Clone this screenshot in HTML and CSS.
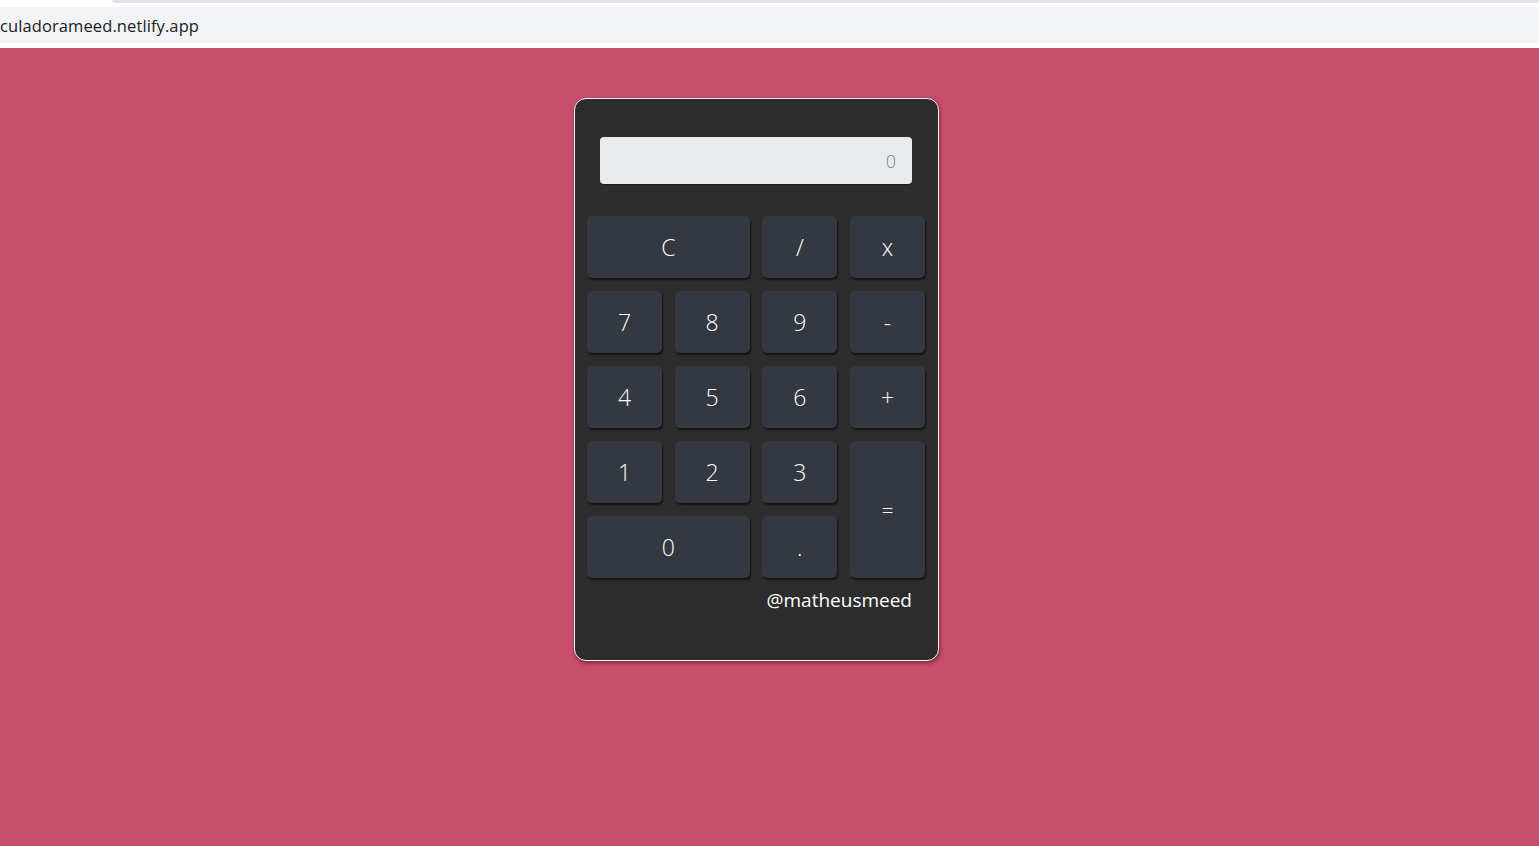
FILE: index.html
```html
<!DOCTYPE html>
<html lang="pt-BR">
<head>
<meta charset="utf-8">
<title>Calculadora</title>
<link rel="stylesheet" href="styles.css">
</head>
<body>
<div class="chrome">
  <div class="tabline"></div>
  <div class="urlbar"><span class="url">culadorameed.netlify.app</span></div>
</div>
<main class="page">
  <div class="calc">
    <div class="display">0</div>
    <div class="keys">
      <button class="key wide">C</button>
      <button class="key">/</button>
      <button class="key">x</button>
      <button class="key">7</button>
      <button class="key">8</button>
      <button class="key">9</button>
      <button class="key">-</button>
      <button class="key">4</button>
      <button class="key">5</button>
      <button class="key">6</button>
      <button class="key">+</button>
      <button class="key">1</button>
      <button class="key">2</button>
      <button class="key">3</button>
      <button class="key tall">=</button>
      <button class="key wide">0</button>
      <button class="key">.</button>
    </div>
    <div class="credit">@matheusmeed</div>
  </div>
</main>
</body>
</html>
```
FILE: styles.css
```css
* { box-sizing: border-box; }
html, body { margin: 0; padding: 0; }
body {
  width: 1539px;
  height: 846px;
  overflow: hidden;
  background: #c94e6d;
  font-family: "Open Sans", "Noto Sans", sans-serif;
}
.chrome {
  height: 48px;
  background: #ffffff;
  overflow: hidden;
}
.tabline {
  height: 3px;
  margin-left: 112px;
  background: #dfe3e7;
  border-bottom-left-radius: 3px;
}
.urlbar {
  margin-top: 4px;
  height: 36px;
  background: #f1f3f4;
  display: flex;
  align-items: center;
  padding-left: 0;
}
.url {
  font-family: "Open Sans", "Noto Sans", sans-serif;
  font-size: 16.5px;
  color: #202124;
  padding-left: 0;
  letter-spacing: 0.1px;
}
.page {
  padding: 50px 0 0 574px;
}
.calc {
  width: 365px;
  height: 563px;
  background: #2d2d2d;
  border: 1px solid #f4f4f4;
  border-radius: 12px;
  box-shadow: 1px 2px 4px rgba(60, 10, 25, 0.55);
  padding: 38px 12px 0 12px;
}
.display {
  margin: 0 14px 0 13px;
  height: 47px;
  background: #e8ebee;
  border-radius: 4px;
  box-shadow: 0 1px 1px rgba(0,0,0,0.35);
  color: #7b7b7b;
  font-size: 18px;
  font-weight: 300;
  display: flex;
  align-items: center;
  justify-content: flex-end;
  padding-right: 16px;
}
.keys {
  margin-top: 32px;
  display: grid;
  grid-template-columns: repeat(4, 75px);
  grid-auto-rows: 62px;
  column-gap: 12.67px;
  row-gap: 13px;
}
.key {
  background: #343840;
  border: none;
  border-radius: 5px;
  box-shadow: 1px 2px 2px rgba(0, 0, 0, 0.6);
  color: #ffffff;
  font-family: "Open Sans", "Noto Sans", sans-serif;
  font-weight: 300;
  font-size: 23px;
  padding: 0;
  display: flex;
  align-items: center;
  justify-content: center;
}
.wide { grid-column: span 2; }
.tall { grid-row: span 2; font-size: 21px; }
.credit {
  margin-top: 9px;
  text-align: right;
  padding-right: 14px;
  color: #ffffff;
  font-size: 19px;
  font-family: "Open Sans", "Noto Sans", sans-serif;
}
```
